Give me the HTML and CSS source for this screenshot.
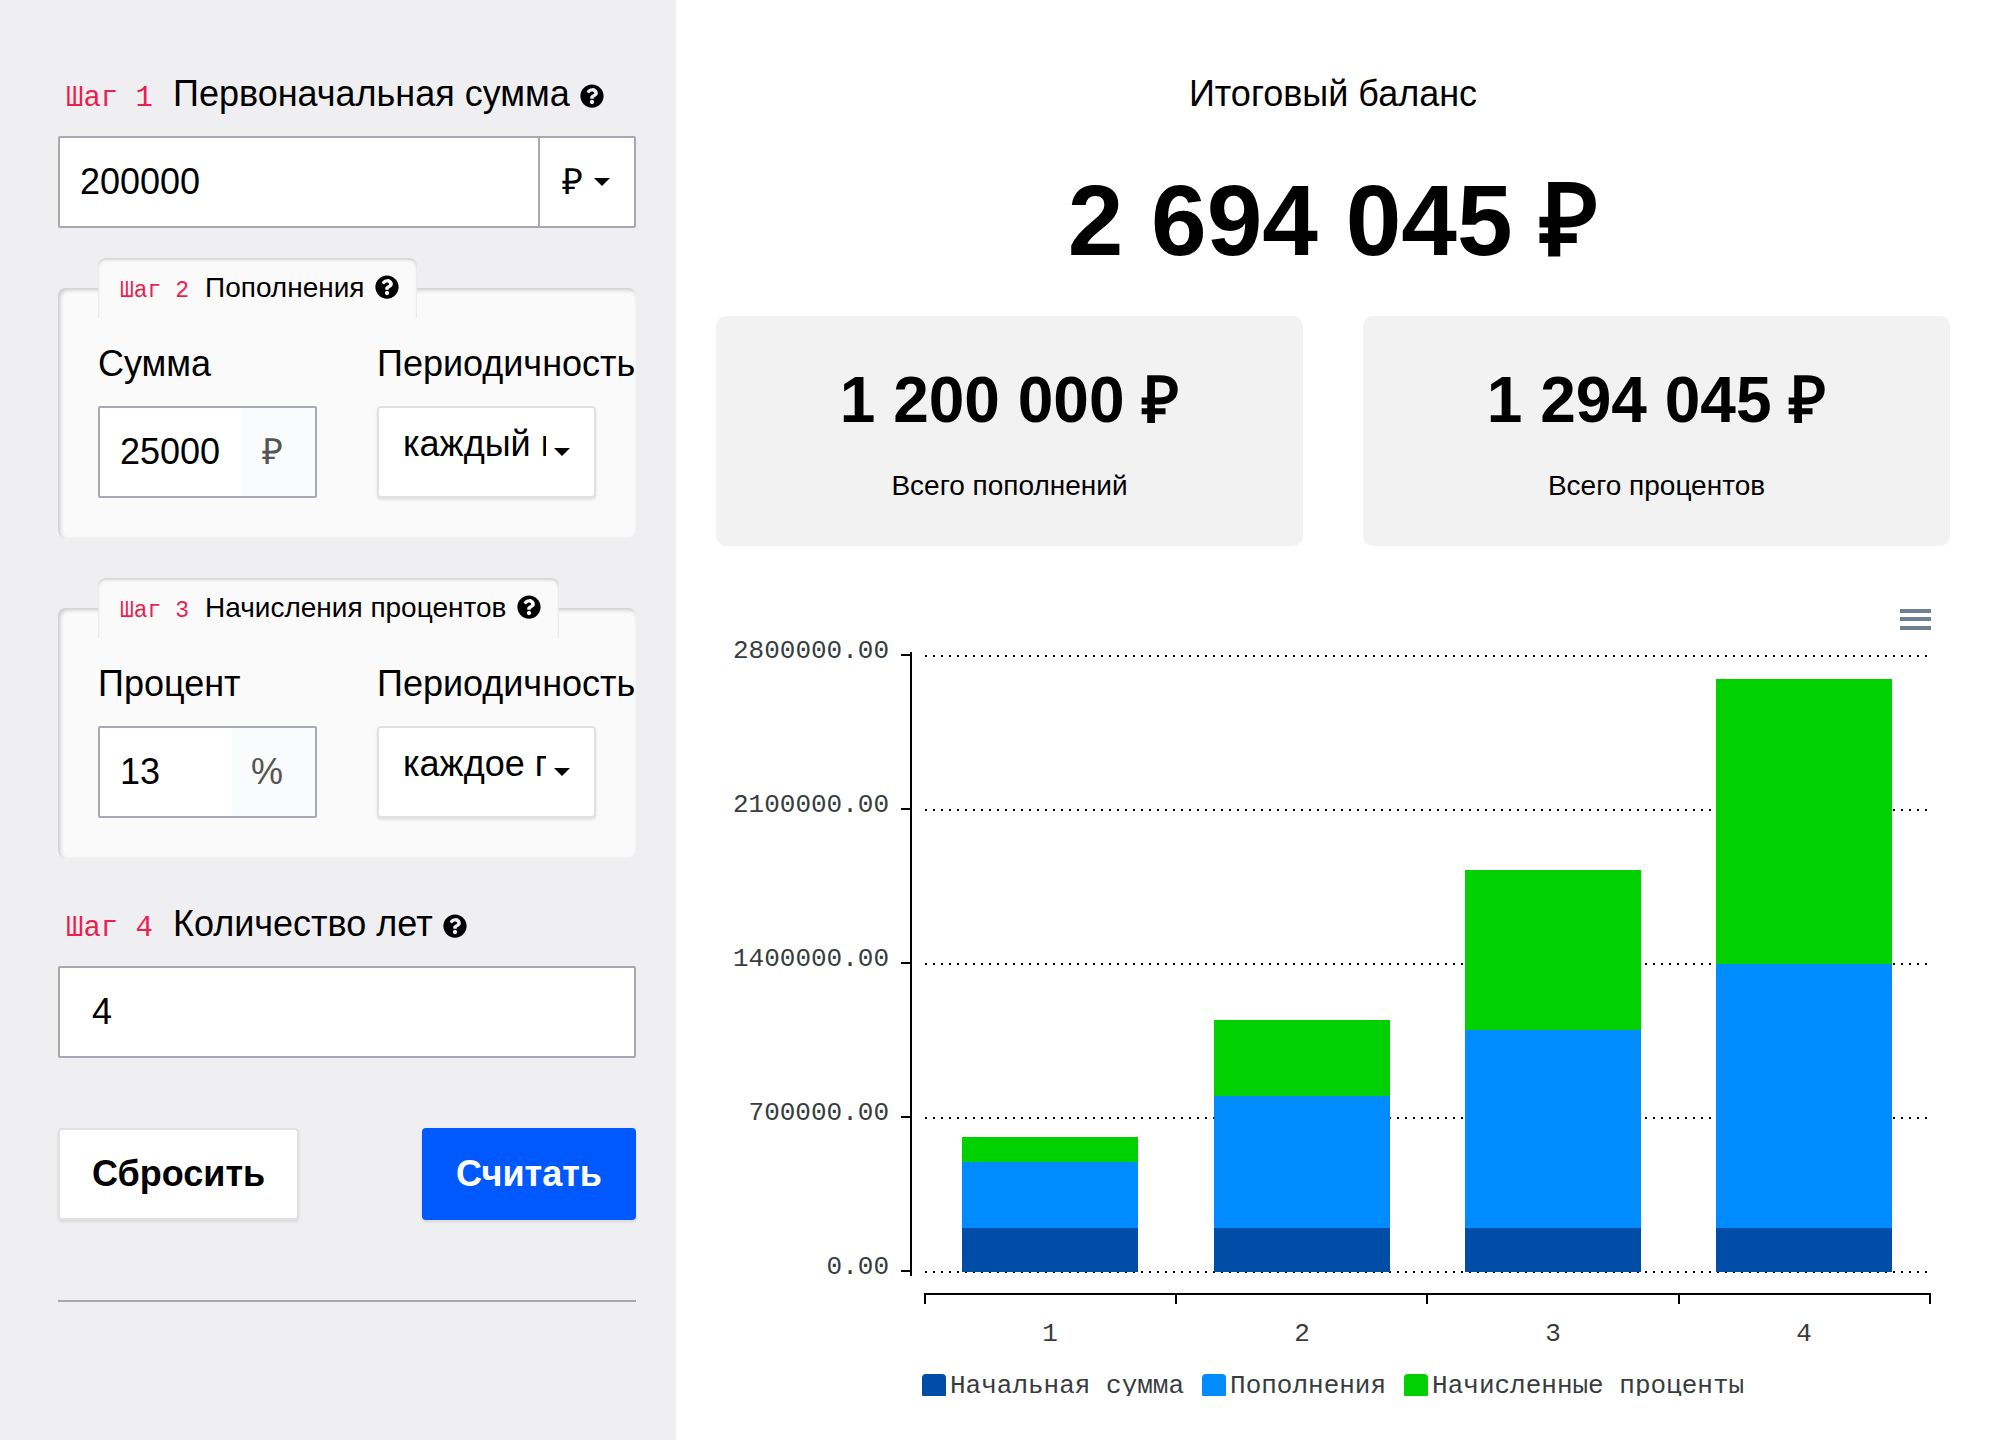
FILE: index.html
```html
<!DOCTYPE html>
<html lang="ru">
<head>
<meta charset="utf-8">
<meta name="viewport" content="width=device-width, initial-scale=1">
<title>Калькулятор сложных процентов</title>
<link rel="stylesheet" href="styles.css">
</head>
<body>
<svg class="sprite" aria-hidden="true">
  <symbol id="help" viewBox="0 0 512 512">
    <path d="M504 256c0 137-111 248-248 248S8 393 8 256C8 119 119 8 256 8s248 111 248 248zM262.700 90c-54.500 0-89.300 23-116.500 63.800-3.500 5.300-2.400 12.400 2.700 16.300l34.700 26.300c5.200 3.900 12.600 3 16.700-2.100 17.900-22.700 30.100-35.800 57.300-35.800 20.400 0 45.700 13.100 45.700 33 0 15-12.400 22.700-32.500 34C247.100 238.500 216 255 216 296v4c0 6.600 5.400 12 12 12h56c6.600 0 12-5.400 12-12v-1.300c0-28.800 84.200-30 84.200-108 0-58.700-60.900-103.200-119.700-103.200zM256 338c-25.400 0-46 20.600-46 46s20.600 46 46 46 46-20.600 46-46-20.600-46-46-46z"/>
  </symbol>
  <symbol id="caret" viewBox="0 0 16 8"><path d="M0 0h16L8 8z"/></symbol>
</svg>
<div class="layout">
  <aside class="sidebar">
    <form>
      <div class="heading"><code class="step">Шаг 1</code><label for="start">Первоначальная сумма</label> <svg class="help"><use href="#help"/></svg></div>
      <div class="field">
        <input id="start" class="input" type="text" value="200000">
        <div class="select currency">
          <select aria-label="Валюта"><option>₽</option><option>$</option><option>€</option></select>
          <svg class="caret"><use href="#caret"/></svg>
        </div>
      </div>

      <fieldset class="group">
        <legend><code class="step">Шаг 2</code>Пополнения <svg class="help"><use href="#help"/></svg></legend>
        <div class="columns">
          <div>
            <label class="caption" for="sum">Сумма</label>
            <div class="field"><input id="sum" class="input" type="text" value="25000"><span class="addon">₽</span></div>
          </div>
          <div>
            <label class="caption" for="sum-period">Периодичность</label>
            <div class="select period">
              <select id="sum-period"><option>каждый месяц</option><option>каждый год</option></select>
              <svg class="caret"><use href="#caret"/></svg>
            </div>
          </div>
        </div>
      </fieldset>

      <fieldset class="group">
        <legend><code class="step">Шаг 3</code>Начисления процентов <svg class="help"><use href="#help"/></svg></legend>
        <div class="columns">
          <div>
            <label class="caption" for="rate">Процент</label>
            <div class="field"><input id="rate" class="input" type="text" value="13"><span class="addon">%</span></div>
          </div>
          <div>
            <label class="caption" for="rate-period">Периодичность</label>
            <div class="select period">
              <select id="rate-period"><option>каждое полугодие</option><option>каждый год</option></select>
              <svg class="caret"><use href="#caret"/></svg>
            </div>
          </div>
        </div>
      </fieldset>

      <div class="heading"><code class="step">Шаг 4</code><label for="years">Количество лет</label> <svg class="help"><use href="#help"/></svg></div>
      <div class="field"><input id="years" class="input input-wide" type="text" value="4"></div>

      <div class="actions">
        <button class="button" type="reset">Сбросить</button>
        <button class="button primary" type="button">Считать</button>
      </div>
    </form>
    <hr>
  </aside>

  <main class="results">
    <h1>Итоговый баланс</h1>
    <p class="total">2 694 045 ₽</p>
    <div class="cards">
      <section class="card"><p class="value">1 200 000 ₽</p><p class="note">Всего пополнений</p></section>
      <section class="card"><p class="value">1 294 045 ₽</p><p class="note">Всего процентов</p></section>
    </div>

    <svg class="chart" viewBox="0 0 1234 762" role="img" aria-label="Рост баланса по годам">
      <path class="menu" d="M1184 19h31v4h-31zM1184 27h31v4h-31zM1184 36h31v4h-31z"/>
      <path class="grid" d="M209 66H1214M209 220H1214M209 374H1214M209 528H1214M209 682H1214"/>
      <path class="axis" d="M195 62V686M185 65H195M185 219H195M185 373H195M185 527H195M185 681H195"/>
      <path class="axis" d="M209 714V704H1214V714M460 704V714M711 704V714M963 704V714"/>
      <g class="labels-y">
        <text x="173" y="68">2800000.00</text>
        <text x="173" y="222">2100000.00</text>
        <text x="173" y="376">1400000.00</text>
        <text x="173" y="530">700000.00</text>
        <text x="173" y="684">0.00</text>
      </g>
      <g class="interest">
        <rect x="246" y="547" width="176" height="25"/>
        <rect x="498" y="430" width="176" height="76"/>
        <rect x="749" y="280" width="176" height="160"/>
        <rect x="1000" y="89" width="176" height="285"/>
      </g>
      <g class="deposits">
        <rect x="246" y="572" width="176" height="66"/>
        <rect x="498" y="506" width="176" height="132"/>
        <rect x="749" y="440" width="176" height="198"/>
        <rect x="1000" y="374" width="176" height="264"/>
      </g>
      <g class="initial">
        <rect x="246" y="638" width="176" height="44"/>
        <rect x="498" y="638" width="176" height="44"/>
        <rect x="749" y="638" width="176" height="44"/>
        <rect x="1000" y="638" width="176" height="44"/>
      </g>
      <g class="labels-x">
        <text x="334" y="751">1</text>
        <text x="586" y="751">2</text>
        <text x="837" y="751">3</text>
        <text x="1088" y="751">4</text>
      </g>
    </svg>
    <ul class="legend">
      <li><span class="swatch initial"></span>Начальная сумма</li>
      <li><span class="swatch deposits"></span>Пополнения</li>
      <li><span class="swatch interest"></span>Начисленные проценты</li>
    </ul>
  </main>
</div>
</body>
</html>
```
FILE: styles.css
```css
* { box-sizing: border-box; }

body {
  margin: 0;
  background: #fff;
  color: #000;
  font: 36px/48px "Liberation Sans", Arial, sans-serif;
}

p, h1, ul { margin: 0; padding: 0; }

.sprite { display: none; }

.layout {
  display: grid;
  grid-template-columns: 676fr 1329fr;
  min-height: 100vh;
}

/* Form */

.sidebar {
  min-width: 0;
  padding: 70px 40px 40px 58px;
  background: #efeff2;
}

.heading {
  margin-bottom: 18px;
  white-space: nowrap;
}

.step {
  margin-right: 14px;
  padding: 0 6px 0 8px;
  color: #eb1f4f;
  font: 29px/32px "Liberation Mono", Consolas, monospace;
}

.help {
  width: 24px;
  height: 24px;
  vertical-align: -2px;
}

.field {
  display: flex;
  height: 92px;
  border: 2px solid #a6a9b1;
  border-radius: 2px;
  background: #fff;
}

.input {
  flex: 1;
  min-width: 0;
  padding: 0 0 0 20px;
  border: 0;
  background: none;
  color: inherit;
  font: inherit;
}

.input-wide { padding-left: 32px; }

.addon {
  padding: 20px 32px 0 20px;
  background: #fafbfd;
  color: #555;
}

.select { display: grid; align-items: center; }

.select select {
  grid-area: 1 / 1;
  width: 100%;
  height: 100%;
  min-width: 0;
  border: 0;
  appearance: none;
  background: none;
  color: inherit;
  font: inherit;
}

.caret {
  grid-area: 1 / 1;
  justify-self: end;
  width: 16px;
  height: 8px;
  margin-right: 24px;
  pointer-events: none;
}

.currency {
  width: 96px;
  border-left: 2px solid #a6a9b1;
}

.currency select { padding: 0 44px 0 22px; }

.period {
  height: 92px;
  border: 2px solid #e1e1e1;
  border-radius: 4px;
  background: #fff;
  box-shadow: 0 2px 3px rgba(0, 0, 0, .1);
}

.period select { padding: 0 48px 16px 24px; }

.group {
  min-width: 0;
  margin: 40px 0 42px;
  padding: 22px 40px 40px;
  border: 0;
  border-radius: 8px;
  background: #fafafa;
  box-shadow: inset 2px 2px 4px rgba(0, 0, 0, .2);
}

.field + .group { margin: 30px 0 0; }

.group legend {
  height: 60px;
  padding: 14px 18px 0 14px;
  border-radius: 8px 8px 0 0;
  background: #fafafa;
  box-shadow: inset 0 2px 3px rgba(0, 0, 0, .16);
  font-size: 28px;
  line-height: 32px;
  white-space: nowrap;
}

.group .step { margin-right: 10px; font-size: 23px; }

.group .help { margin-left: 3px; }

.columns {
  display: grid;
  grid-template-columns: 1fr 1fr;
  gap: 60px;
}

.columns > div { min-width: 0; }

.caption {
  display: block;
  margin-bottom: 18px;
  white-space: nowrap;
}

.actions {
  display: flex;
  justify-content: space-between;
  margin: 70px 0 80px;
}

.button {
  height: 92px;
  padding: 0 32px;
  border: 2px solid #e1e1e1;
  border-radius: 4px;
  background: #fff;
  box-shadow: 0 2px 3px rgba(0, 0, 0, .1);
  color: #000;
  font: inherit;
  font-weight: 700;
}

.primary {
  border-color: #0059ff;
  background: #0059ff;
  color: #fff;
}

hr {
  margin: 0;
  border: 0;
  border-top: 2px solid #a6a9b1;
}

/* Results */

.results {
  min-width: 0;
  padding: 70px 55px 40px 40px;
  text-align: center;
}

h1 { font-size: 36px; font-weight: 400; }

.total {
  margin: 42px 0 36px;
  font-size: 100px;
  font-weight: 700;
  line-height: 120px;
}

.cards {
  display: grid;
  grid-template-columns: 1fr 1fr;
  gap: 60px;
}

.card {
  padding: 46px 20px 44px;
  border-radius: 10px;
  background: #f2f2f2;
}

.value {
  margin-bottom: 32px;
  font-size: 64px;
  font-weight: 700;
  line-height: 76px;
}

.note { font-size: 28px; line-height: 32px; }

/* Chart */

.chart {
  display: block;
  width: 100%;
  margin-top: 44px;
}

.chart text {
  fill: #373d3f;
  font: 26px "Liberation Mono", Consolas, monospace;
}

.labels-y { text-anchor: end; }
.labels-x { text-anchor: middle; }

.menu { fill: #6e8192; }

.axis, .grid {
  fill: none;
  stroke: #000;
  stroke-width: 2px;
}

.grid { stroke-dasharray: 2 6; }

.initial { fill: #004da8; background: #004da8; }
.deposits { fill: #008cff; background: #008cff; }
.interest { fill: #02d100; background: #02d100; }

.legend {
  display: flex;
  gap: 18px;
  height: 22px;
  margin: 22px 0 0 206px;
  overflow: hidden;
  color: #373d3f;
  font: 26px/24px "Liberation Mono", Consolas, monospace;
  list-style: none;
  white-space: nowrap;
}

.legend li { display: flex; gap: 4px; }

.swatch {
  width: 24px;
  height: 24px;
  border-radius: 4px;
}
```
